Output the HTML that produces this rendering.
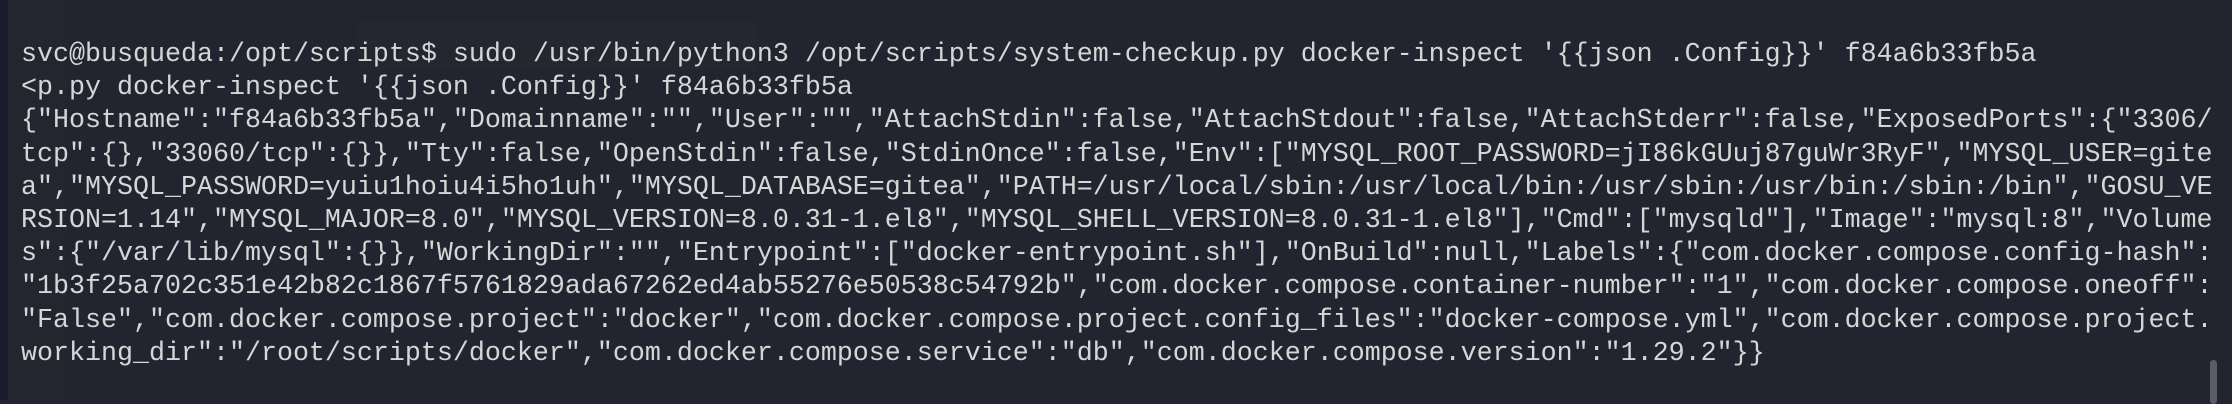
<!DOCTYPE html>
<html><head><meta charset="utf-8"><style>
html,body{margin:0;padding:0;}
body{width:2232px;height:400px;overflow:hidden;background:#22252f;position:relative;}
.strip{position:absolute;left:0;top:0;width:8px;height:400px;background:#191c2b;}
.gut{position:absolute;left:8px;top:0;width:59px;height:400px;background:#23262f;}
pre{position:absolute;left:21px;top:39px;margin:0;font-family:"Liberation Mono",monospace;font-size:26.67px;line-height:33.2px;color:#d6d6d6;white-space:pre;}
.sb{position:absolute;left:2210px;top:360px;width:7px;height:44px;border-radius:4px;background:#5a5d66;}
.box{position:absolute;left:358px;top:22px;width:400px;height:48px;background:#242730;border-radius:4px;}
</style></head><body>
<div class="strip"></div><div class="gut"></div><div class="box"></div>
<pre>svc@busqueda:/opt/scripts$ sudo /usr/bin/python3 /opt/scripts/system-checkup.py docker-inspect '{{json .Config}}' f84a6b33fb5a
&lt;p.py docker-inspect '{{json .Config}}' f84a6b33fb5a
{"Hostname":"f84a6b33fb5a","Domainname":"","User":"","AttachStdin":false,"AttachStdout":false,"AttachStderr":false,"ExposedPorts":{"3306/
tcp":{},"33060/tcp":{}},"Tty":false,"OpenStdin":false,"StdinOnce":false,"Env":["MYSQL_ROOT_PASSWORD=jI86kGUuj87guWr3RyF","MYSQL_USER=gite
a","MYSQL_PASSWORD=yuiu1hoiu4i5ho1uh","MYSQL_DATABASE=gitea","PATH=/usr/local/sbin:/usr/local/bin:/usr/sbin:/usr/bin:/sbin:/bin","GOSU_VE
RSION=1.14","MYSQL_MAJOR=8.0","MYSQL_VERSION=8.0.31-1.el8","MYSQL_SHELL_VERSION=8.0.31-1.el8"],"Cmd":["mysqld"],"Image":"mysql:8","Volume
s":{"/var/lib/mysql":{}},"WorkingDir":"","Entrypoint":["docker-entrypoint.sh"],"OnBuild":null,"Labels":{"com.docker.compose.config-hash":
"1b3f25a702c351e42b82c1867f5761829ada67262ed4ab55276e50538c54792b","com.docker.compose.container-number":"1","com.docker.compose.oneoff":
"False","com.docker.compose.project":"docker","com.docker.compose.project.config_files":"docker-compose.yml","com.docker.compose.project.
working_dir":"/root/scripts/docker","com.docker.compose.service":"db","com.docker.compose.version":"1.29.2"}}</pre>
<div class="sb"></div>
</body></html>
